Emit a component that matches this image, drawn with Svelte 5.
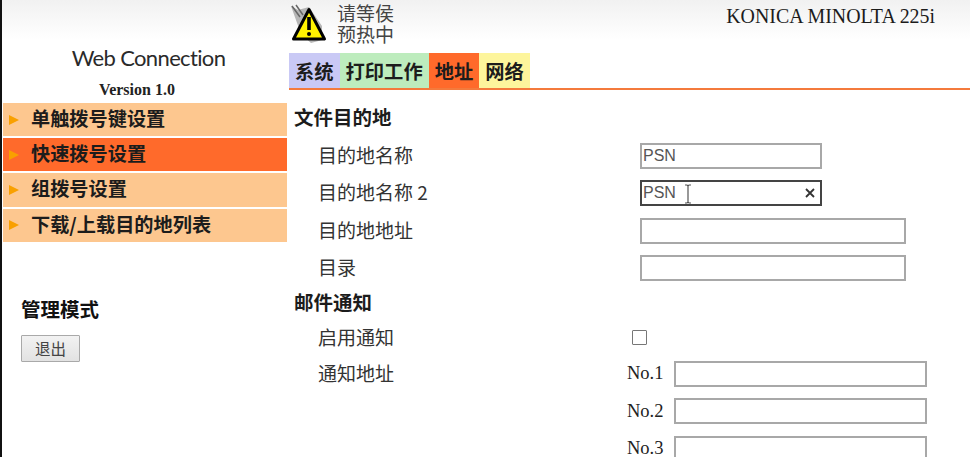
<script>
  const menu = [
    { label: '单触拨号键设置' },
    { label: '快速拨号设置', active: true },
    { label: '组拨号设置' },
    { label: '下载/上载目的地列表' }
  ];
  const tabs = [
    { label: '系统', cls: 'sys' },
    { label: '打印工作', cls: 'job' },
    { label: '地址', cls: 'addr' },
    { label: '网络', cls: 'net' }
  ];
</script>

<div class="page">
  <aside class="side">
    <div class="brand">Web Connection</div>
    <div class="version">Version 1.0</div>
    <nav class="menu">
      {#each menu as m}
        <div class="item" class:active={m.active}>
          <span class="arrow"></span>
          <span class="item-text">{m.label}</span>
        </div>
      {/each}
    </nav>
    <div class="admin">管理模式</div>
    <button class="logout" type="button">退出</button>
  </aside>

  <main class="main">
    <header class="head">
      <div class="status">
        <svg class="warn" width="38" height="42" viewBox="0 0 38 42">
          <path d="M2 2 L9 6 L20 3 L33 22 L33 36 L22 39 L12 30 Z" fill="#9a9a9a" opacity="0.7"/>
          <path d="M3 2 L11 13 M7 1 L14 11" stroke="#666" stroke-width="1.5"/>
          <path d="M20 5.5 L35.5 35 L4.5 35 Z" fill="#fff200" stroke="#000" stroke-width="3" stroke-linejoin="round"/>
          <path d="M20 13 V26" stroke="#000" stroke-width="3.6"/>
          <circle cx="20" cy="30" r="2" fill="#000"/>
        </svg>
        <div class="status-text">请等侯<br />预热中</div>
      </div>
      <div class="model">KONICA MINOLTA 225i</div>
    </header>

    <div class="tabs">
      {#each tabs as t}
        <div class="tab {t.cls}">{t.label}</div>
      {/each}
    </div>

    <section class="form">
      <h2 class="sec first">文件目的地</h2>
      <div class="row">
        <span class="lab">目的地名称</span>
        <div class="input short"><span class="val">PSN</span></div>
      </div>
      <div class="row">
        <span class="lab">目的地名称 2</span>
        <div class="input short focus">
          <span class="val">PSN</span>
          <svg class="caret" width="10" height="20" viewBox="0 0 10 20">
            <path d="M2 1 H4 L5 2 L6 1 H8 M5 2 V18 M2 19 H4 L5 18 L6 19 H8" fill="none" stroke="#555" stroke-width="1.2"/>
          </svg>
          <svg class="clear" width="10" height="10" viewBox="0 0 10 10">
            <path d="M1 1 L9 9 M9 1 L1 9" stroke="#333" stroke-width="1.8"/>
          </svg>
        </div>
      </div>
      <div class="row">
        <span class="lab">目的地地址</span>
        <div class="input long"></div>
      </div>
      <div class="row">
        <span class="lab">目录</span>
        <div class="input long"></div>
      </div>

      <h2 class="sec">邮件通知</h2>
      <div class="row check-row">
        <span class="lab">启用通知</span>
        <div class="check"></div>
      </div>
      <div class="row no-row">
        <span class="lab">通知地址</span>
        <span class="no">No.1</span>
        <div class="input wide"></div>
      </div>
      <div class="row no-row">
        <span class="lab"></span>
        <span class="no">No.2</span>
        <div class="input wide"></div>
      </div>
      <div class="row no-row">
        <span class="lab"></span>
        <span class="no">No.3</span>
        <div class="input wide"></div>
      </div>
    </section>
  </main>
</div>

<style>
  :global(body) {
    margin: 0;
    background: #fff;
    overflow: hidden;
  }
  .page {
    display: flex;
    width: 970px;
    height: 457px;
    overflow: hidden;
    box-sizing: border-box;
    border-left: 2px solid #111;
    background: linear-gradient(#f1f1f1 0, #fbfbfb 28px, #fff 40px);
    font-family: "Liberation Serif", "Noto Sans CJK SC", serif;
    color: #111;
  }
  .side {
    width: 285px;
    flex: none;
    padding-top: 44px;
    box-sizing: border-box;
  }
  .brand {
    font-family: Lato, "Liberation Sans", sans-serif;
    font-size: 22px;
    letter-spacing: -0.65px;
    line-height: 28px;
    text-align: center;
    color: #2a2a2a;
    padding-left: 8px;
  }
  .version {
    font-size: 16px;
    font-weight: bold;
    line-height: 18px;
    margin-top: 9px;
    text-align: center;
    color: #222;
    padding-right: 15px;
  }
  .menu {
    margin-top: 4px;
    display: flex;
    flex-direction: column;
    gap: 2px;
    padding-left: 1px;
  }
  .item {
    height: 33.2px;
    background: #fdc78f;
    display: flex;
    align-items: center;
    font-size: 19.2px;
    font-weight: 600;
    font-family: "Noto Sans CJK SC", sans-serif;
    color: #1c1c1c;
    padding-left: 6px;
    gap: 12px;
  }
  .item-text {
    padding-bottom: 3px;
  }
  .item.active {
    background: #ff6a2b;
  }
  .arrow {
    width: 0;
    height: 0;
    border-left: 10px solid #f9a000;
    border-top: 5px solid transparent;
    border-bottom: 5px solid transparent;
  }
  .admin {
    margin: 55px 0 0 19px;
    font-family: "Noto Sans CJK SC", sans-serif;
    font-weight: 600;
    font-size: 19.5px;
    line-height: 24px;
  }
  .logout {
    display: block;
    margin: 14px 0 0 19px;
    width: 59px;
    height: 27px;
    padding: 0;
    border: 1.5px solid #a9a9a9;
    border-radius: 1px;
    background: linear-gradient(#f2f2f2, #e2e2e2);
    font-family: "Noto Sans CJK SC", sans-serif;
    font-size: 15.5px;
    color: #444;
  }
  .main {
    flex: 1;
    min-width: 0;
    padding-left: 2px;
  }
  .head {
    display: flex;
    justify-content: space-between;
    height: 53px;
  }
  .status {
    display: flex;
    padding-top: 2px;
    gap: 10px;
  }
  .warn {
    margin-top: 2px;
  }
  .status-text {
    font-family: "Noto Sans CJK SC", sans-serif;
    font-size: 19px;
    line-height: 21px;
    color: #444;
  }
  .model {
    font-size: 19.9px;
    padding: 5px 35px 0 0;
    color: #1c1c1c;
  }
  .tabs {
    display: flex;
    height: 35px;
    border-bottom: 2px solid #f47a3c;
  }
  .tab {
    display: flex;
    align-items: center;
    padding: 0 6px;
    font-family: "Noto Sans CJK SC", sans-serif;
    font-size: 19.3px;
    font-weight: 600;
    color: #1c1c1c;
  }
  .sys { background: #c9c9f5; }
  .job { background: #bdecbd; }
  .addr { background: #ff6a2b; }
  .net { background: #fdf59c; }
  .form {
    padding-left: 5px;
    font-family: "Noto Sans CJK SC", sans-serif;
  }
  .sec {
    margin: 0;
    font-size: 19.5px;
    font-weight: 600;
    height: 33px;
    box-sizing: border-box;
    padding-bottom: 4px;
    display: flex;
    align-items: center;
    color: #1c1c1c;
  }
  .sec.first {
    margin-top: 12px;
    height: 35px;
    padding-bottom: 6px;
  }
  .row {
    display: flex;
    align-items: center;
    height: 37.5px;
    font-size: 19px;
    color: #333;
  }
  .lab {
    width: 346px;
    flex: none;
    padding-left: 24px;
    padding-bottom: 3px;
    box-sizing: border-box;
  }
  .input {
    box-sizing: border-box;
    height: 26px;
    border: 2px solid #a8a8a8;
    background: #fff;
    display: flex;
    align-items: center;
    position: relative;
    padding-left: 1px;
    font-family: "Liberation Sans", sans-serif;
    font-size: 16px;
    color: #555;
  }
  .short { width: 182px; }
  .long { width: 266px; }
  .wide { width: 253px; }
  .focus { border-color: #444; }
  .caret { position: absolute; left: 41px; top: 2px; }
  .clear { position: absolute; right: 5px; top: 6px; }
  .check-row { height: 35px; }
  .check {
    width: 15px;
    height: 15px;
    box-sizing: border-box;
    border: 1.5px solid #777;
    border-radius: 1px;
    margin-left: -8px;
  }
  .no {
    width: 47px;
    margin-left: -13px;
    flex: none;
    font-family: "Liberation Serif", serif;
    font-size: 18.5px;
    color: #222;
  }
</style>
